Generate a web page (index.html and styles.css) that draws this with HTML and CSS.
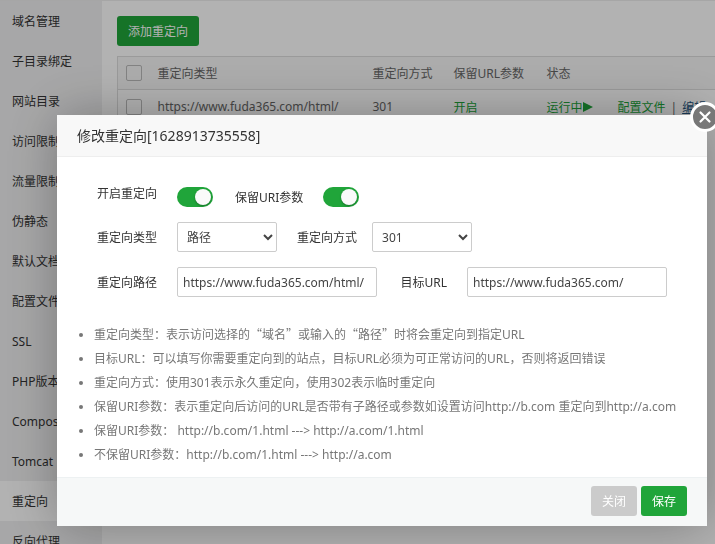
FILE: index.html
```html
<!DOCTYPE html>
<html lang="zh-CN">
<head>
    <meta charset="UTF-8">
    <meta name="viewport" content="width=device-width, initial-scale=1.0">
    <title>修改重定向</title>
    <link rel="stylesheet" href="styles.css">
</head>
<body>
    <div class="site">
        <nav class="menu">
            <a href="#">域名管理</a>
            <a href="#">子目录绑定</a>
            <a href="#">网站目录</a>
            <a href="#">访问限制</a>
            <a href="#">流量限制</a>
            <a href="#">伪静态</a>
            <a href="#">默认文档</a>
            <a href="#">配置文件</a>
            <a href="#">SSL</a>
            <a href="#">PHP版本</a>
            <a href="#">Composer</a>
            <a href="#">Tomcat</a>
            <a href="#" class="active">重定向</a>
            <a href="#">反向代理</a>
        </nav>
        <main class="content">
            <button type="button" class="btn btn-success">添加重定向</button>
            <table class="redirect-table">
                <thead>
                    <tr>
                        <th class="col-check"><input type="checkbox" class="check" aria-label="全选"></th>
                        <th class="col-type">重定向类型</th>
                        <th class="col-mode">重定向方式</th>
                        <th class="col-keep">保留URL参数</th>
                        <th class="col-status">状态</th>
                        <th class="col-action"></th>
                    </tr>
                </thead>
                <tbody>
                    <tr>
                        <td><input type="checkbox" class="check" aria-label="选择"></td>
                        <td>https://www.fuda365.com/html/</td>
                        <td>301</td>
                        <td><a href="#" class="link">开启</a></td>
                        <td>
                            <a href="#" class="link status">运行中<svg width="10" height="12" viewBox="0 0 10 12"><path d="M0 1 L10 6 L0 11 Z" fill="currentColor"/></svg></a>
                        </td>
                        <td><a href="#" class="link">配置文件</a><span class="split">|</span><a href="#" class="link link-edit">编辑</a></td>
                    </tr>
                </tbody>
            </table>
        </main>
    </div>

    <div class="overlay">
        <div class="dialog" role="dialog" aria-labelledby="dialog-title">
            <h2 class="dialog-title" id="dialog-title">修改重定向[1628913735558]</h2>
            <button type="button" class="dialog-close" aria-label="关闭">
                <svg width="24" height="24" viewBox="0 0 24 24"><path d="M7.5 7.5 L16.5 16.5 M16.5 7.5 L7.5 16.5" stroke="#fff" stroke-width="2.2" stroke-linecap="round"/></svg>
            </button>
            <form class="dialog-form">
                <div class="line line-switch">
                    <label for="open" class="name name-open">开启重定向</label>
                    <input type="checkbox" id="open" class="switch" checked>
                    <label for="keep" class="name-keep">保留URI参数</label>
                    <input type="checkbox" id="keep" class="switch" checked>
                </div>
                <div class="line">
                    <label for="type" class="name">重定向类型</label>
                    <select id="type" class="field field-select">
                        <option>路径</option>
                        <option>域名</option>
                    </select>
                    <label for="mode" class="name-mode">重定向方式</label>
                    <select id="mode" class="field field-select">
                        <option>301</option>
                        <option>302</option>
                    </select>
                </div>
                <div class="line">
                    <label for="path" class="name">重定向路径</label>
                    <input type="text" id="path" class="field field-text" value="https://www.fuda365.com/html/">
                    <label for="target" class="name-target">目标URL</label>
                    <input type="text" id="target" class="field field-text" value="https://www.fuda365.com/">
                </div>
                <ul class="help">
                    <li>重定向类型：表示访问选择的<span class="cjk">“域名”</span>或输入的<span class="cjk">“路径”</span>时将会重定向到指定URL</li>
                    <li>目标URL：可以填写你需要重定向到的站点，目标URL必须为可正常访问的URL，否则将返回错误</li>
                    <li>重定向方式：使用301表示永久重定向，使用302表示临时重定向</li>
                    <li>保留URI参数：表示重定向后访问的URL是否带有子路径或参数如设置访问http://b.com 重定向到http://a.com</li>
                    <li>保留URI参数： http://b.com/1.html ---&gt; http://a.com/1.html</li>
                    <li>不保留URI参数：http://b.com/1.html ---&gt; http://a.com</li>
                </ul>
                <div class="dialog-footer">
                    <button type="button" class="btn btn-close">关闭</button>
                    <button type="submit" class="btn btn-success">保存</button>
                </div>
            </form>
        </div>
    </div>
</body>
</html>
```

FILE: styles.css
```css
* {
    box-sizing: border-box;
}

body {
    margin: 0;
    height: 100vh;
    overflow: hidden;
    background-color: #fff;
    color: #333;
    font-family: "Noto Sans", "Noto Sans CJK SC", sans-serif;
    font-size: 12px;
}

button, input, select {
    font-family: inherit;
    font-size: 12px;
}

a {
    color: inherit;
    text-decoration: none;
}

/* page behind the dialog */
.site {
    display: flex;
    height: 100vh;
    border-top: 1px solid #eee;
    overflow: hidden;
}

.menu {
    flex: 0 0 102px;
    background-color: #f0f0f1;
}

.menu a {
    display: block;
    height: 40px;
    padding-left: 12px;
    line-height: 42px;
    white-space: nowrap;
}

.menu .active {
    background-color: #fff;
}

.content {
    flex: 1;
    min-width: 0;
    padding: 15px;
}

.btn {
    height: 30px;
    padding: 0 11px;
    border: none;
    border-radius: 3px;
    color: #fff;
    cursor: pointer;
}

.btn-success {
    background-color: #20a53a;
}

.btn-close {
    background-color: #cbcbcb;
}

.redirect-table {
    width: 620px;
    margin-top: 10px;
    border: 1px solid #ddd;
    border-collapse: collapse;
    table-layout: fixed;
    color: #666;
}

.redirect-table th,
.redirect-table td {
    height: 34px;
    padding: 0 8px;
    border-bottom: 1px solid #ddd;
    font-weight: normal;
    text-align: left;
    white-space: nowrap;
}

.redirect-table th {
    height: 33px;
    background-color: #f6f6f6;
}

.col-check { width: 32px; }
.col-type { width: 215px; }
.col-mode { width: 81px; }
.col-keep { width: 93px; }
.col-status { width: 71px; }

.check {
    display: block;
    width: 16px;
    height: 16px;
    margin: 0;
    border: 1px solid #bbb;
    border-radius: 2px;
    appearance: none;
}

.link {
    color: #20a53a;
}

.link-edit {
    color: #23527c;
    text-decoration: underline;
}

.status {
    display: flex;
    align-items: center;
}

.split {
    margin: 0 5px;
}

/* dialog */
.overlay {
    position: fixed;
    inset: 0;
    padding: 115px 8px 0 57px;
    background-color: rgba(0, 0, 0, 0.3);
}

.dialog {
    position: relative;
    background-color: #fff;
    box-shadow: 1px 1px 50px rgba(0, 0, 0, 0.3);
}

.dialog-title {
    height: 42px;
    margin: 0;
    padding: 0 20px;
    border-bottom: 1px solid #eee;
    background-color: #f8f8f8;
    font-size: 14px;
    font-weight: normal;
    line-height: 42px;
}

.dialog-close {
    position: absolute;
    top: -13px;
    right: -13px;
    width: 30px;
    height: 30px;
    padding: 0;
    border: 3px solid #fff;
    border-radius: 50%;
    background-color: #787878;
    cursor: pointer;
}

.dialog-close svg {
    display: block;
}

.dialog-form {
    padding-top: 20px;
}

.line {
    display: flex;
    align-items: center;
    margin-bottom: 15px;
}

.line-switch {
    height: 40px;
    margin-bottom: 5px;
}

.name {
    width: 100px;
    margin-right: 20px;
    text-align: right;
}

.name-open {
    padding-bottom: 8px;
}

.name-keep {
    margin: 0 20px 0 22px;
}

.name-mode {
    margin: 0 15px 0 20px;
}

.name-target {
    width: 70px;
    margin-right: 20px;
    text-align: right;
}

.field {
    height: 30px;
    border: 1px solid #ccc;
    border-radius: 2px;
    background-color: #fff;
    color: #444;
}

.field-select {
    width: 100px;
    padding: 0 0 0 5px;
}

.field-text {
    width: 200px;
    padding: 0 5px;
}

.switch {
    width: 36px;
    height: 20px;
    margin: 0;
    padding: 2px;
    border-radius: 10px;
    background-color: #20a53a;
    appearance: none;
    cursor: pointer;
}

.switch::before {
    content: "";
    display: block;
    width: 16px;
    height: 16px;
    border-radius: 50%;
    background-color: #fafafa;
    box-shadow: 0 1px 2px rgba(0, 0, 0, 0.3);
}

.switch:checked::before {
    margin-left: 16px;
}

.help {
    margin: 0;
    padding: 10px 20px 10px 37px;
    color: #777;
    line-height: 24px;
}

/* full-width quotation marks */
.cjk {
    font-family: "Noto Sans CJK SC", sans-serif;
}

.dialog-footer {
    display: flex;
    justify-content: flex-end;
    gap: 4px;
    padding: 8px 20px 10px;
    border-top: 1px solid #edf1f2;
    background-color: #f6f8f8;
}
```
